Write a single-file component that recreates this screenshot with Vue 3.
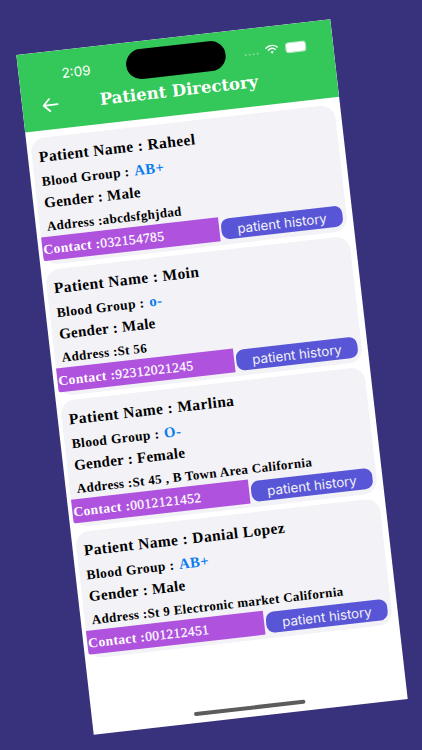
<script setup>
const patients = [
  { name: 'Raheel', blood: 'AB+', gender: 'Male', address: 'abcdsfghjdad', contact: '032154785' },
  { name: 'Moin', blood: 'o-', gender: 'Male', address: 'St 56', contact: '92312021245' },
  { name: 'Marlina', blood: 'O-', gender: 'Female', address: 'St 45 , B Town Area California', contact: '0012121452' },
  { name: 'Danial Lopez', blood: 'AB+', gender: 'Male', address: 'St 9 Electronic market California', contact: '001212451' }
]
</script>

<template>
  <div class="page">
    <div class="screen">
      <header class="head">
        <div class="status">
          <span class="time">2:09</span>
          <span class="island"></span>
          <div class="sys">
            <span class="dots"><i></i><i></i><i></i><i></i></span>
            <svg class="wifi" viewBox="0 0 16 12" width="13" height="10">
              <path d="M1 4.2C4.9.6 11.1.6 15 4.2" fill="none" stroke="#fff" stroke-width="1.7" stroke-linecap="round"/>
              <path d="M3.6 6.9c2.6-2.3 6.2-2.3 8.8 0" fill="none" stroke="#fff" stroke-width="1.7" stroke-linecap="round"/>
              <path d="M8 11.6 5.9 9.3c1.2-1 3-1 4.2 0z" fill="#fff"/>
            </svg>
            <span class="batt"><b></b></span>
          </div>
        </div>
        <div class="nav">
          <svg class="back" viewBox="0 0 18 16" width="18" height="15">
            <path d="M17 8H2M8.5 1.5 2 8l6.5 6.5" fill="none" stroke="#fff" stroke-width="1.9" stroke-linecap="round" stroke-linejoin="round"/>
          </svg>
          <h1 class="title">Patient Directory</h1>
        </div>
      </header>
      <main class="list">
        <article v-for="p in patients" :key="p.name" class="card">
          <p class="line pname">Patient Name : {{ p.name }}</p>
          <p class="line blood">Blood Group : <span class="group">{{ p.blood }}</span></p>
          <p class="line gender">Gender : {{ p.gender }}</p>
          <p class="line addr">Address :{{ p.address }}</p>
          <div class="foot">
            <div class="contact">Contact :<span class="num">{{ p.contact }}</span></div>
            <button class="hist">patient history</button>
          </div>
        </article>
      </main>
      <span class="home"></span>
    </div>
  </div>
</template>

<style scoped>
.page {
  width: 422px;
  height: 750px;
  box-sizing: border-box;
  padding: 4px 0 0 2px;
  background: #37327b;
  display: flex;
  align-items: center;
  justify-content: center;
  overflow: hidden;
}
.screen {
  width: 316px;
  height: 684px;
  flex: none;
  position: relative;
  background: #fff;
  display: flex;
  flex-direction: column;
  transform: rotate(-6.5deg);
  overflow: hidden;
}
.head {
  height: 78px;
  background: #34c759;
  color: #fff;
  box-sizing: border-box;
  padding-top: 8px;
}
.status {
  display: grid;
  grid-template-columns: 1fr 100px 1fr;
  align-items: center;
  height: 30px;
}
.time {
  font: 400 13.5px Inter, sans-serif;
  justify-self: start;
  margin-left: 43px;
}
.island {
  height: 30px;
  border-radius: 15px;
  background: #000;
}
.sys {
  display: flex;
  align-items: center;
  margin-left: 19px;
}
.dots {
  display: flex;
  gap: 2px;
  margin-top: 6px;
  margin-right: 7px;
}
.dots i {
  width: 2px;
  height: 2px;
  border-radius: 50%;
  background: rgba(255, 255, 255, 0.4);
}
.wifi {
  flex: none;
}
.batt {
  width: 21px;
  height: 11px;
  flex: none;
  box-sizing: border-box;
  margin-left: 7px;
  border-radius: 3.5px;
  border: 1px solid rgba(255, 255, 255, 0.6);
  display: flex;
}
.batt b {
  flex: 1;
  background: #fff;
  border-radius: 2px;
}
.nav {
  display: flex;
  align-items: center;
  height: 30px;
  padding-left: 19px;
}
.back {
  flex: none;
}
.title {
  margin: 0 0 0 41px;
  font: 700 16.5px "DejaVu Serif", serif;
  white-space: nowrap;
}
.list {
  display: flex;
  flex-direction: column;
  gap: 5px;
  padding: 7px 6px 0 4px;
}
.card {
  height: 127px;
  box-sizing: border-box;
  background: #f2f2f7;
  border-radius: 14px;
  display: flex;
  flex-direction: column;
  color: #000;
  font-family: "Liberation Serif", serif;
  font-weight: 700;
  padding-top: 9px;
}
.line {
  margin: 0 0 0 7px;
  white-space: nowrap;
}
.pname {
  font-size: 15.5px;
  line-height: 20px;
  letter-spacing: 0.42px;
}
.blood {
  font-size: 13.5px;
  line-height: 23px;
  margin-top: 3px;
  letter-spacing: 0.4px;
}
.group {
  color: #0a7cf0;
  font-size: 14.8px;
  margin-left: 1px;
}
.gender {
  font-size: 15px;
  line-height: 20px;
  letter-spacing: 0.3px;
}
.addr {
  font-size: 13px;
  line-height: 18px;
  margin-top: 5px;
  letter-spacing: 0.36px;
}
.foot {
  display: flex;
  align-items: flex-start;
  margin-top: 1px;
  gap: 2px;
}
.contact {
  width: 178px;
  height: 24px;
  line-height: 25px;
  background: #af52de;
  color: #fff;
  font-size: 13.5px;
  letter-spacing: 0.4px;
  padding-left: 1px;
  box-sizing: border-box;
  border-radius: 0 0 0 2px;
}
.num {
  font-weight: 400;
  -webkit-text-stroke: 0.25px #fff;
}
.hist {
  width: 122px;
  height: 21px;
  margin: 2px 0 0 0;
  padding: 0;
  border: 0;
  border-radius: 8px;
  background: #5856d6;
  color: #f2f2f7;
  font: 400 13.3px Inter, sans-serif;
}
.home {
  position: absolute;
  left: 102px;
  bottom: 7px;
  width: 112px;
  height: 4px;
  border-radius: 2px;
  background: #5c5c5c;
}
</style>
